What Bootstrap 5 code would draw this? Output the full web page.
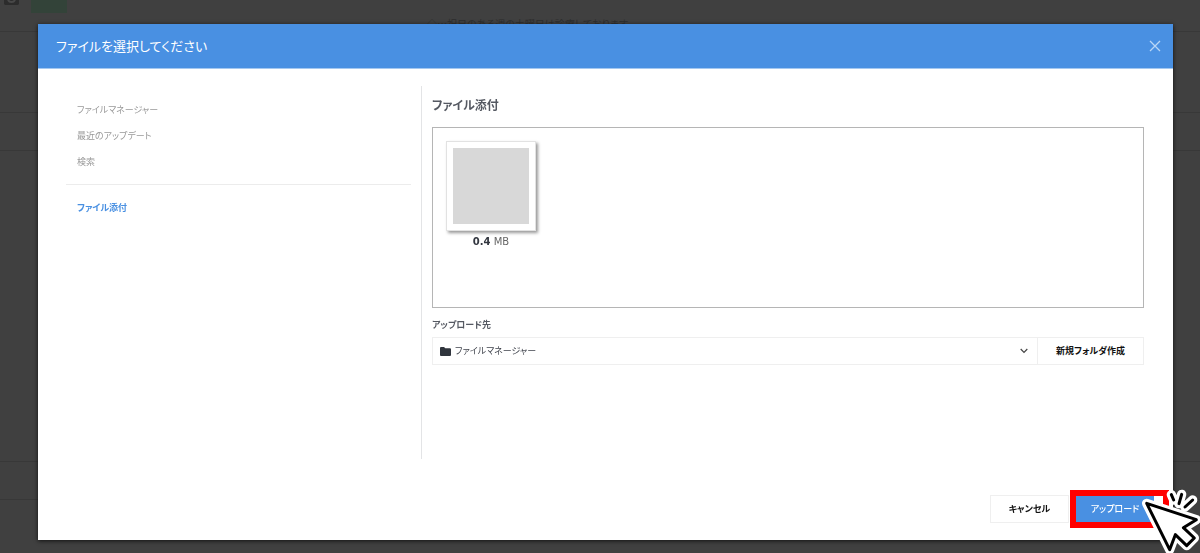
<!DOCTYPE html>
<html lang="ja">
<head>
<meta charset="utf-8">
<meta name="viewport" content="width=device-width, initial-scale=1">
<title>ファイルを選択してください</title>
<link href="https://cdn.jsdelivr.net/npm/bootstrap@5.3.0/dist/css/bootstrap.min.css" rel="stylesheet">
<style>
body{font-family:"Noto Sans CJK JP",sans-serif;font-feature-settings:"palt";font-size:9px;line-height:16px;color:#40444d;background:#404040;overflow:hidden}
button,select{font-feature-settings:inherit}
.page-behind{min-height:100vh;color:#2e2e2e}
.page-behind>div{border-bottom:1px solid #383838}
.page-behind>div:last-child{border:0}
.bar-row{height:32px;overflow:hidden}
.tool-green{width:36px;height:13px;background:#334339}
.tall-row{height:81px}
.thin-row{height:38px}
.end-row{height:53px}
.notice{font-size:10px;padding-right:212px}
.picker{margin:24px 27px 13px 38px;max-width:none}
.picker .modal-content{min-height:calc(100vh - 37px);border:0;border-radius:0;box-shadow:0 1px 4px #111;color:inherit}
.picker .modal-header{height:45px;padding:0 12px 0 18px;background:#4990e2;border-bottom:1px solid #a4c8f0;border-radius:0}
.picker .modal-title{font-size:13px;line-height:20px;font-weight:400;color:#fff}
.close-x{border:0;background:none;padding:0;width:12px;height:12px;line-height:0}
.picker .modal-body{padding:17px 29px 0 28px}
.side{width:356px;padding-right:10px;border-right:1px solid #e3e4e6;min-height:373px}
.side a{display:block;padding:5px 11px;color:#999;text-decoration:none;line-height:16px}
.side a.active{color:#4990e2;font-weight:700}
.side ul{padding-top:11px;padding-bottom:9px;border-bottom:1px solid #ececec}
.side-end{padding-top:10px}
.pane{padding-left:10px}
.pane h2{font-size:12px;line-height:20px;font-weight:700;color:#555962;margin:9px 0 12px}
.drop{height:181px;border:1px solid #b5b5b5;padding:13px}
.thumb{width:90px}
.thumb-frame{height:90px;padding:6px;border:1px solid #e2e2e2;background:#fff;box-shadow:2px 2px 3px #999}
.thumb-fill{height:100%;background:#d8d8d8}
.thumb figcaption{font-family:"DejaVu Sans",sans-serif;font-size:10px;line-height:16px;margin-top:3px;text-align:center;color:#666}
.thumb b{color:#333740}
.dest-label{font-weight:700;color:#555962;margin:9px 0 4px}
.dest{height:28px}
.dest-box{border:1px solid #efefef;border-right:0;padding-left:7px;padding-right:9px}
.dest-box select{appearance:none;border:0;background:none;padding:0;height:100%;color:#40444d;font-size:9px}
.plain{height:28px;padding:0;border:1px solid #efefef;border-radius:0;background:#fff;font-size:9px;line-height:16px;font-weight:700;color:#111}
.new-folder{width:107px}
.cancel{width:79px}
.picker .modal-footer{border:0;padding:0 4px 12px;gap:1px}
.picker .modal-footer>*{margin:0}
.ring{border:6px solid #f00;padding-right:9px;height:38px}
.upload{width:78px;height:26px;padding:0;border:0;border-radius:0;background:#4990e2;color:#fff;font-size:9px;font-weight:500;line-height:16px}
.upload:hover{background:#3b82d6;color:#fff}
.pointer{position:fixed;right:0;bottom:0;z-index:2000;pointer-events:none}
</style>
</head>
<body>
<div class="page-behind d-flex flex-column" aria-hidden="true">
  <div class="bar-row d-flex align-items-start">
    <svg class="ms-1 me-2 flex-shrink-0" width="15" height="5" viewBox="0 0 15 5"><path d="M0 0h15v4l-1 1H1L0 4z" fill="#2c2c2c"/><path d="M4 0a4 4 0 0 0 7 0" fill="none" stroke="#484848" stroke-width="2"/></svg>
    <div class="tool-green ms-1 flex-shrink-0"></div>
    <div class="notice flex-grow-1 pt-3 text-center">◇…祝日のある週の土曜日は診療しております</div>
  </div>
  <div class="tall-row"></div>
  <div class="thin-row"></div>
  <div class="flex-grow-1"></div>
  <div class="thin-row"></div>
  <div class="end-row"></div>
</div>

<div class="modal d-block" role="dialog" aria-labelledby="pickerTitle">
  <div class="modal-dialog picker">
    <div class="modal-content">
      <div class="modal-header d-flex justify-content-between align-items-center">
        <h1 class="modal-title" id="pickerTitle">ファイルを選択してください</h1>
        <button type="button" class="close-x" aria-label="閉じる"><svg width="12" height="12" viewBox="0 0 12 12"><path d="M1 1l10 10M11 1L1 11" stroke="#b9d6f6" stroke-width="1.3" fill="none"/></svg></button>
      </div>
      <div class="modal-body d-flex align-items-start">
        <nav class="side flex-shrink-0">
          <ul class="list-unstyled mb-0">
            <li><a href="#">ファイルマネージャー</a></li>
            <li><a href="#">最近のアップデート</a></li>
            <li><a href="#">検索</a></li>
          </ul>
          <div class="side-end"><a href="#" class="active">ファイル添付</a></div>
        </nav>
        <section class="pane flex-grow-1">
          <h2>ファイル添付</h2>
          <div class="drop">
            <figure class="thumb m-0">
              <div class="thumb-frame"><div class="thumb-fill"></div></div>
              <figcaption><b>0.4</b> MB</figcaption>
            </figure>
          </div>
          <label class="dest-label d-block" for="dest">アップロード先</label>
          <div class="dest d-flex">
            <div class="dest-box d-flex align-items-center flex-grow-1">
              <svg class="me-1" width="11" height="9" viewBox="0 0 11 9"><path d="M1 0h3l1.3 1.3H10a1 1 0 0 1 1 1V8a1 1 0 0 1-1 1H1a1 1 0 0 1-1-1V1a1 1 0 0 1 1-1z" fill="#30353d"/></svg>
              <select id="dest" class="flex-grow-1"><option>ファイルマネージャー</option></select>
              <svg width="8" height="6" viewBox="0 0 8 6"><path d="M.7 1L4 4.4 7.3 1" fill="none" stroke="#444" stroke-width="1.2"/></svg>
            </div>
            <button type="button" class="btn plain new-folder">新規フォルダ作成</button>
          </div>
        </section>
      </div>
      <div class="modal-footer">
        <button type="button" class="btn plain cancel">キャンセル</button>
        <div class="ring"><button type="button" class="btn upload d-block">アップロード</button></div>
      </div>
    </div>
  </div>
</div>

<svg class="pointer" width="70" height="73" viewBox="0 0 210 219" aria-hidden="true">
  <g fill="none" stroke="#fff" stroke-linecap="round" stroke-linejoin="round" stroke-width="28">
    <path d="M124 44l7 16M155 43l-8 28M188 60l-23 21"/>
    <path d="M50 70L199 119 160 143 193 174 170 197 136 164 119 209z"/>
  </g>
  <g stroke="#000" stroke-linecap="round" stroke-linejoin="round" stroke-width="9">
    <path fill="none" d="M124 44l7 16M155 43l-8 28M188 60l-23 21"/>
    <path fill="#fff" d="M50 70L199 119 160 143 193 174 170 197 136 164 119 209z"/>
  </g>
</svg>
<script src="https://cdn.jsdelivr.net/npm/bootstrap@5.3.0/dist/js/bootstrap.bundle.min.js"></script>
</body>
</html>
